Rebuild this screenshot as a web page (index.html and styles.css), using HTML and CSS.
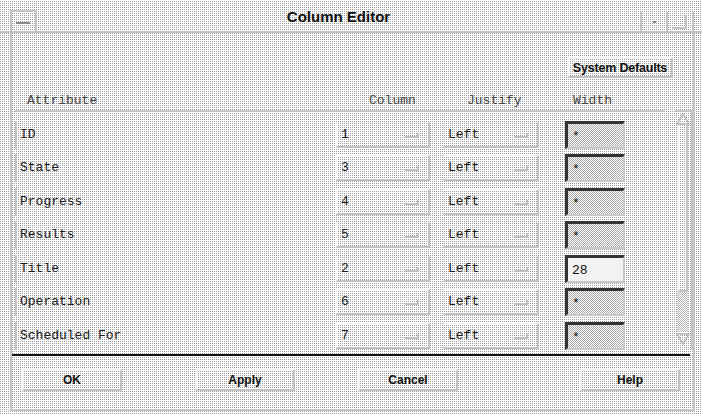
FILE: index.html
```html
<!DOCTYPE html>
<html lang="en">
<head>
    <meta charset="UTF-8">
    <title>Column Editor</title>
    <link rel="stylesheet" href="styles.css">
</head>
<body>
    <div class="titlebar">
        <div class="menu-btn"><span class="dash"></span></div>
        <div class="title">Column Editor</div>
        <div class="win-btn min"><span class="dot"></span></div>
        <div class="win-btn max"><span class="box"></span></div>
    </div>

    <div class="client">
        <div class="top">
            <button class="btn defaults">System Defaults</button>
        </div>

        <div class="cols head">
            <span class="h-attr">Attribute</span>
            <span class="h-col">Column</span>
            <span></span>
            <span class="h-just">Justify</span>
            <span></span>
            <span class="h-width">Width</span>
        </div>

        <div class="scroll-area">
            <div class="list">
                <div class="cols row">
                    <span class="label">ID</span>
                    <span class="option">1<i class="ind"></i></span>
                    <span></span>
                    <span class="option">Left<i class="ind"></i></span>
                    <span></span>
                    <span class="field">*</span>
                </div>
                <div class="cols row">
                    <span class="label">State</span>
                    <span class="option">3<i class="ind"></i></span>
                    <span></span>
                    <span class="option">Left<i class="ind"></i></span>
                    <span></span>
                    <span class="field">*</span>
                </div>
                <div class="cols row">
                    <span class="label">Progress</span>
                    <span class="option">4<i class="ind"></i></span>
                    <span></span>
                    <span class="option">Left<i class="ind"></i></span>
                    <span></span>
                    <span class="field">*</span>
                </div>
                <div class="cols row">
                    <span class="label">Results</span>
                    <span class="option">5<i class="ind"></i></span>
                    <span></span>
                    <span class="option">Left<i class="ind"></i></span>
                    <span></span>
                    <span class="field">*</span>
                </div>
                <div class="cols row">
                    <span class="label">Title</span>
                    <span class="option">2<i class="ind"></i></span>
                    <span></span>
                    <span class="option">Left<i class="ind"></i></span>
                    <span></span>
                    <span class="field active">28</span>
                </div>
                <div class="cols row">
                    <span class="label">Operation</span>
                    <span class="option">6<i class="ind"></i></span>
                    <span></span>
                    <span class="option">Left<i class="ind"></i></span>
                    <span></span>
                    <span class="field">*</span>
                </div>
                <div class="cols row">
                    <span class="label">Scheduled For</span>
                    <span class="option">7<i class="ind"></i></span>
                    <span></span>
                    <span class="option">Left<i class="ind"></i></span>
                    <span></span>
                    <span class="field">*</span>
                </div>
            </div>

            <div class="scrollbar">
                <svg class="arrow" width="14" height="12" viewBox="0 0 14 12">
                    <polygon points="7,1 13,11 1,11" fill="none" stroke="#b8b8b8" stroke-width="1.5"/>
                </svg>
                <div class="slider"></div>
                <div class="trough"></div>
                <svg class="arrow" width="14" height="12" viewBox="0 0 14 12">
                    <polygon points="1,1 13,1 7,11" fill="none" stroke="#b8b8b8" stroke-width="1.5"/>
                </svg>
            </div>
        </div>

        <div class="separator"></div>

        <div class="actions">
            <button class="btn">OK</button>
            <button class="btn">Apply</button>
            <button class="btn">Cancel</button>
            <button class="btn">Help</button>
        </div>
    </div>
</body>
</html>
```

FILE: styles.css
```css
body {
    margin: 0;
    width: 702px;
    height: 414px;
    overflow: hidden;
    font-family: "Liberation Sans", Arial, sans-serif;
    color: #1a1a1a;
    background-color: #fff;
    background-image:
        linear-gradient(#fff 1px, transparent 1px),
        linear-gradient(90deg, #9c9c9c 1px, #fff 1px);
    background-size: 2px 2px;
}

/* window manager title bar */
.titlebar {
    display: flex;
    height: 33px;
    box-sizing: border-box;
    border-bottom: 2px solid #c4c4c4;
}
.menu-btn {
    width: 23px;
    margin: 10px 0 0 10px;
    border-top: 2px solid #c4c4c4;
    border-left: 2px solid #c4c4c4;
    border-right: 2px solid #c4c4c4;
    position: relative;
}
.menu-btn .dash {
    position: absolute;
    left: 4px;
    top: 10px;
    width: 14px;
    height: 2px;
    background: #8a8a8a;
}
.title {
    flex: 1;
    text-align: center;
    font-weight: bold;
    font-size: 15px;
    line-height: 33px;
    color: #111;
}
.win-btn {
    width: 24px;
    margin-top: 12px;
    border-left: 2px solid #c4c4c4;
    position: relative;
}
.win-btn.max {
    margin-right: 8px;
    border-right: 2px solid #c4c4c4;
}
.win-btn .dot {
    position: absolute;
    left: 11px;
    top: 9px;
    width: 3px;
    height: 2px;
    background: #888;
}
.win-btn .box {
    position: absolute;
    left: 5px;
    top: 3px;
    width: 12px;
    height: 12px;
    border-right: 2px solid #c0c0c0;
    border-bottom: 2px solid #c0c0c0;
}

/* dialog client area */
.client {
    margin: 0 7px 0 10px;
    height: 378px;
    box-sizing: border-box;
    border-left: 2px solid #c4c4c4;
    border-right: 2px solid #c4c4c4;
    border-bottom: 2px solid #c4c4c4;
}
.top {
    display: flex;
    justify-content: flex-end;
    padding: 24px 20px 0 0;
}

.btn {
    font-family: "Liberation Sans", Arial, sans-serif;
    font-weight: bold;
    font-size: 12px;
    color: #111;
    background: transparent;
    border: 2px solid #c2c2c2;
    border-top-color: #f4f4f4;
    border-left-color: #f4f4f4;
    padding: 0;
    height: 22px;
    width: 100px;
}
.defaults {
    width: 106px;
    height: 21px;
    font-size: 12.5px;
    letter-spacing: -0.2px;
}

/* shared column grid */
.cols {
    display: grid;
    grid-template-columns: 321px 94px 13px 96px 26px 60px;
    align-items: center;
    font-family: "Liberation Mono", "Courier New", monospace;
    font-size: 13px;
}
.head {
    margin: 13px 0 0 6px;
    height: 18px;
    color: #444;
}
.h-attr { padding-left: 9px; }
.h-col { padding-left: 30px; }
.h-just { padding-left: 21px; }
.h-width { padding-left: 5px; }

.scroll-area {
    display: flex;
    align-items: flex-start;
    margin-top: 1px;
}
.list {
    width: 653px;
    height: 233px;
    overflow: hidden;
    margin-left: 3px;
    padding-top: 6px;
    border-top: 2px solid #c4c4c4;
}
.row {
    height: 33.5px;
}
.label {
    height: 28px;
    line-height: 28px;
    padding-left: 3px;
    border-left: 2px solid #c4c4c4;
}
.option {
    height: 23px;
    line-height: 23px;
    padding-left: 4px;
    position: relative;
    border: 1px solid #f4f4f4;
    border-right: 2px solid #c2c2c2;
    border-bottom: 2px solid #c2c2c2;
}
.option .ind {
    position: absolute;
    right: 9px;
    top: 10px;
    width: 12px;
    height: 3px;
    border-bottom: 2px solid #c0c0c0;
    border-right: 2px solid #c0c0c0;
}
.field {
    height: 28px;
    line-height: 26px;
    box-sizing: border-box;
    padding-left: 4px;
    border: 2px solid #c8c8c8;
    border-top: 3px solid #333;
    border-left: 3px solid #333;
    background-image: repeating-conic-gradient(#a8a8a8 0 25%, #fff 0 50%);
    background-size: 2px 2px;
    color: #111;
}
.field.active {
    background-image: none;
    background-color: #f2f2f2;
}

.scrollbar {
    display: flex;
    flex-direction: column;
    width: 16px;
    height: 238px;
    margin-left: 10px;
    border-top: 2px solid #c4c4c4;
    border-right: 2px solid #c4c4c4;
}
.arrow {
    display: block;
    margin: 1px 0 0 1px;
}
.slider {
    height: 165px;
    margin: 0 3px 0 2px;
    border-left: 2px solid #f4f4f4;
    border-right: 2px solid #c4c4c4;
    border-bottom: 2px solid #c4c4c4;
}
.trough {
    height: 40px;
    margin: 0 3px 0 2px;
    background-image: repeating-conic-gradient(#b4b4b4 0 25%, #fff 0 50%);
    background-size: 2px 2px;
}

.separator {
    height: 2px;
    margin: 3px 3px 0 0;
    background: #111;
}

.actions {
    display: grid;
    grid-template-columns: 173px 163px 222px 100px;
    padding: 13px 0 0 10px;
}
```
